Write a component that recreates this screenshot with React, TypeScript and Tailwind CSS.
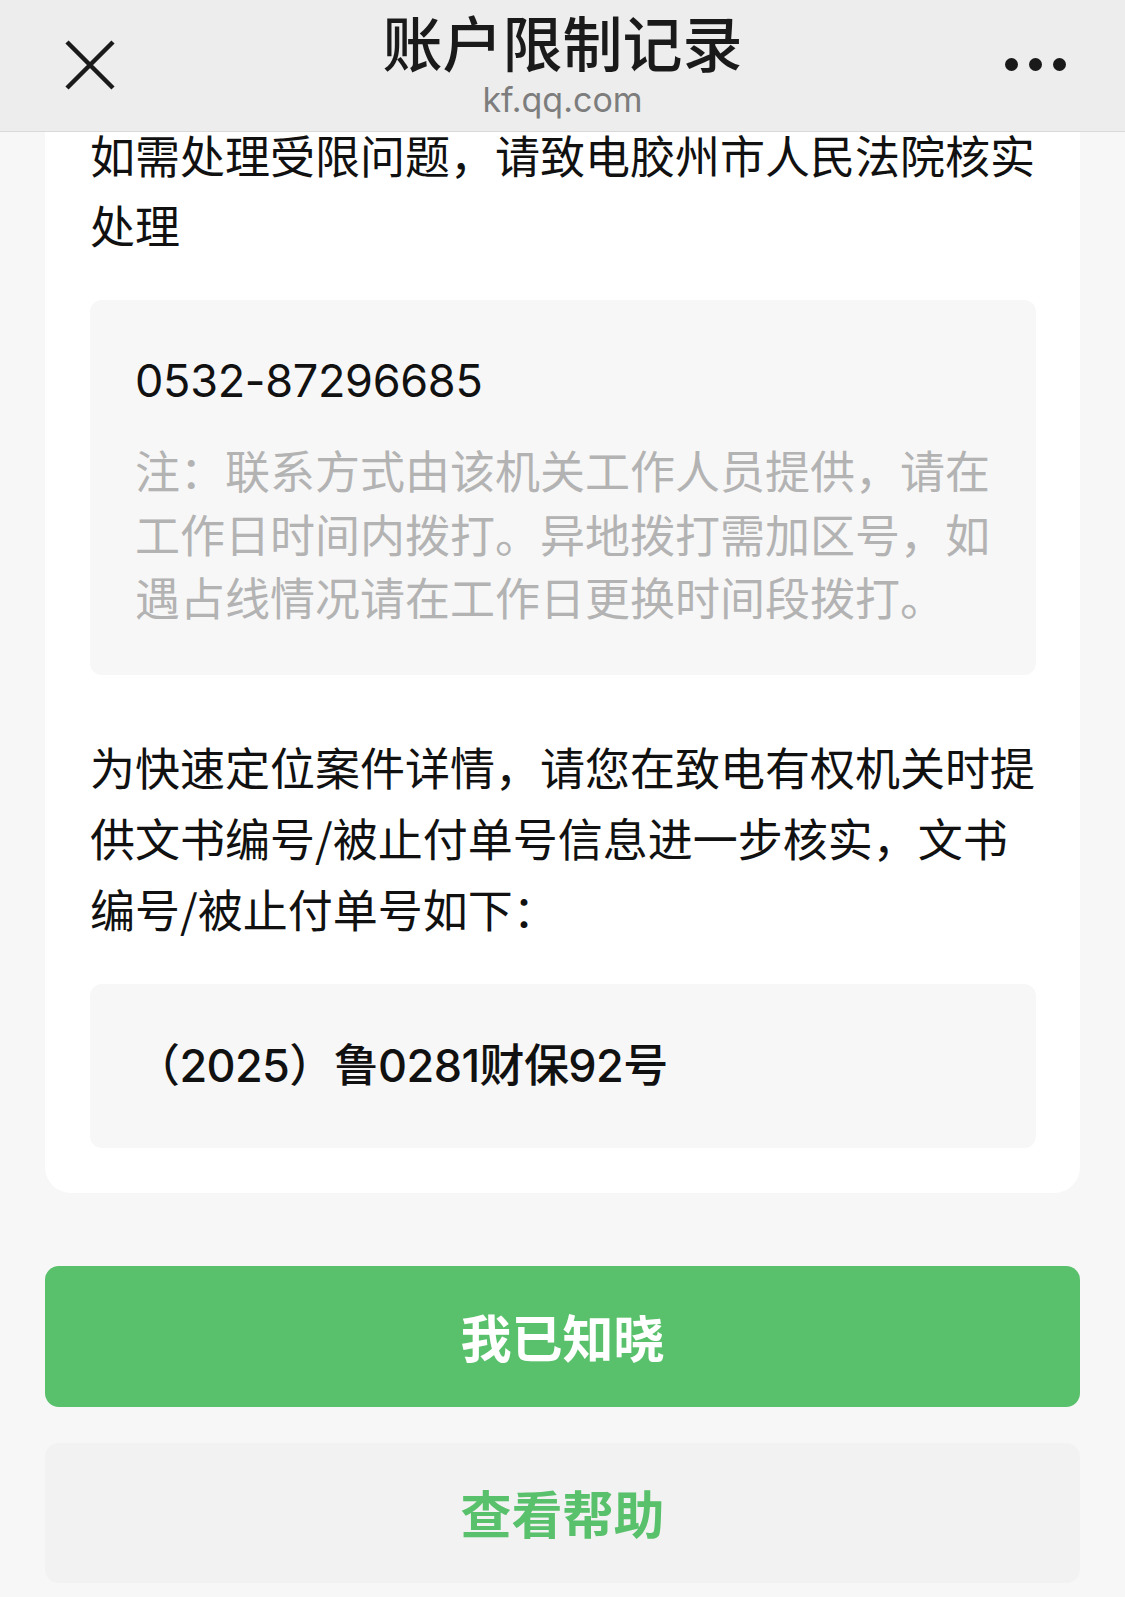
import React from "react";

export default function App() {
  return (
    <div className="w-[1125px] min-h-[1597px] bg-[#f7f7f7] font-['Inter','Noto_Sans_CJK_SC',sans-serif] text-[#111111]">
      <header className="relative z-10 h-[132px] bg-[#ededed] border-b border-[#d9d9d9] grid grid-cols-[1fr_auto_1fr] items-start">
        <div className="pl-[65px] pt-[40px]">
          <svg width="50" height="50" viewBox="0 0 50 50" className="block">
            <path d="M2 2 L48 48 M48 2 L2 48" stroke="#1a1a1a" strokeWidth="4.5" strokeLinecap="butt" fill="none" />
          </svg>
        </div>
        <div className="flex flex-col items-center pt-[11px]">
          <div className="text-[60px] leading-[60px] font-medium text-[#1a1a1a] font-['Noto_Sans_CJK_SC',sans-serif]">账户限制记录</div>
          <div className="text-[34px] leading-[40px] text-[#7d7d7d] mt-[9px]">kf.qq.com</div>
        </div>
        <div className="flex justify-end pr-[59px] pt-[58px] gap-[11px]">
          <span className="block w-[13px] h-[13px] rounded-full bg-[#1a1a1a]" />
          <span className="block w-[13px] h-[13px] rounded-full bg-[#1a1a1a]" />
          <span className="block w-[13px] h-[13px] rounded-full bg-[#1a1a1a]" />
        </div>
      </header>

      <main className="mx-[45px] bg-white rounded-b-[26px] pl-[45px] pr-[44px] pb-[45px]">
        <p className="-mt-[12px] text-[45px] leading-[70px] font-['Noto_Sans_CJK_SC',sans-serif]">
          如需处理受限问题，请致电胶州市人民法院核实处理
        </p>

        <div className="mt-[40px] bg-[#f7f7f7] rounded-[12px] pl-[45px] pr-[44px] pt-[49px] pb-[46px]">
          <div className="text-[45px] leading-[64px] text-[#111111] tracking-[-0.3px]">0532-87296685</div>
          <p className="mt-[25px] text-[45px] leading-[63.5px] text-[#b3b3b3] font-['Noto_Sans_CJK_SC',sans-serif]">
            注：联系方式由该机关工作人员提供，请在工作日时间内拨打。异地拨打需加区号，如遇占线情况请在工作日更换时间段拨打。
          </p>
        </div>

        <p className="mt-[56px] text-[45px] leading-[71px] font-['Noto_Sans_CJK_SC',sans-serif]">
          为快速定位案件详情，请您在致电有权机关时提供文书编号/被止付单号信息进一步核实，文书编号/被止付单号如下：
        </p>

        <div className="mt-[40px] h-[164px] bg-[#f7f7f7] rounded-[12px] flex items-center pl-[45px]">
          <span className="text-[45px] leading-[60px] font-medium text-[#111111] tracking-[-0.6px]">（2025）鲁0281财保92号</span>
        </div>
      </main>

      <div className="mx-[45px] mt-[73px] flex flex-col gap-[36px] pb-[14px]">
        <button className="h-[141px] rounded-[14px] bg-[#59c06b] text-white text-[51px] font-bold font-['Noto_Sans_CJK_SC',sans-serif] flex items-center justify-center">
          我已知晓
        </button>
        <button className="h-[140px] rounded-[14px] bg-[#f2f2f2] text-[#59c06b] text-[51px] font-bold font-['Noto_Sans_CJK_SC',sans-serif] flex items-center justify-center">
          查看帮助
        </button>
      </div>
    </div>
  );
}
